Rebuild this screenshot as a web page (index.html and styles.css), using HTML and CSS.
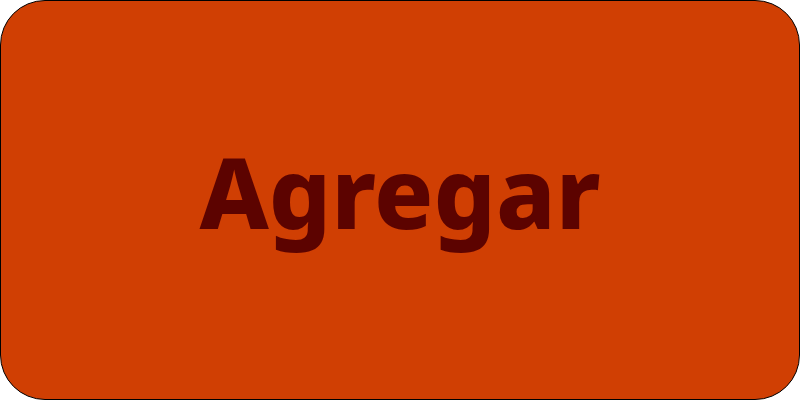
FILE: index.html
```html
<!DOCTYPE html>
<html>
<head>
<meta charset="utf-8">
<link rel="stylesheet" href="styles.css">
</head>
<body>
<button class="btn">Agregar</button>
</body>
</html>
```
FILE: styles.css
```css
html, body { margin: 0; padding: 0; background: #fff; }
.btn {
  box-sizing: border-box;
  width: 800px;
  height: 400px;
  display: flex;
  align-items: center;
  justify-content: center;
  background: #d03f03;
  color: #5c0300;
  border: 1px solid #000;
  border-radius: 45px;
  font-family: "Noto Sans", sans-serif;
  font-weight: 800;
  font-size: 98px;
  padding: 0 0 18px 0;
  margin: 0;
}
```
